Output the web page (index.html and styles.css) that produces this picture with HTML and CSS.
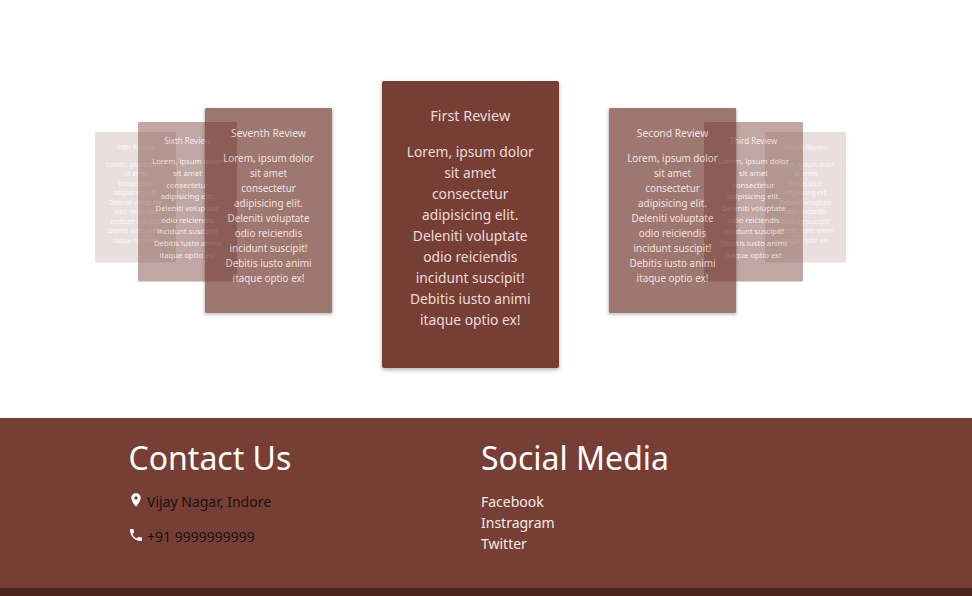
FILE: index.html

```html
<!DOCTYPE html>
<html lang="en">
<head>
    <meta charset="UTF-8">
    <meta name="viewport" content="width=device-width, initial-scale=1.0">
    <title>Reviews</title>
    <link rel="stylesheet" href="styles.css">
</head>
<body>
    <section class="reviews">
        <div class="slide slide-far left">
            <h3>Fifth Review</h3>
            <p>Lorem, ipsum dolor sit amet consectetur adipisicing elit. Deleniti voluptate odio reiciendis incidunt suscipit! Debitis iusto animi itaque optio ex!</p>
        </div>
        <div class="slide slide-far right">
            <h3>Fourth Review</h3>
            <p>Lorem, ipsum dolor sit amet consectetur adipisicing elit. Deleniti voluptate odio reiciendis incidunt suscipit! Debitis iusto animi itaque optio ex!</p>
        </div>
        <div class="slide slide-mid left">
            <h3>Sixth Review</h3>
            <p>Lorem, ipsum dolor sit amet consectetur adipisicing elit. Deleniti voluptate odio reiciendis incidunt suscipit! Debitis iusto animi itaque optio ex!</p>
        </div>
        <div class="slide slide-mid right">
            <h3>Third Review</h3>
            <p>Lorem, ipsum dolor sit amet consectetur adipisicing elit. Deleniti voluptate odio reiciendis incidunt suscipit! Debitis iusto animi itaque optio ex!</p>
        </div>
        <div class="slide slide-near left">
            <h3>Seventh Review</h3>
            <p>Lorem, ipsum dolor sit amet consectetur adipisicing elit. Deleniti voluptate odio reiciendis incidunt suscipit! Debitis iusto animi itaque optio ex!</p>
        </div>
        <div class="slide slide-near right">
            <h3>Second Review</h3>
            <p>Lorem, ipsum dolor sit amet consectetur adipisicing elit. Deleniti voluptate odio reiciendis incidunt suscipit! Debitis iusto animi itaque optio ex!</p>
        </div>
        <div class="slide slide-active">
            <h3>First Review</h3>
            <p>Lorem, ipsum dolor sit amet consectetur adipisicing elit. Deleniti voluptate odio reiciendis incidunt suscipit! Debitis iusto animi itaque optio ex!</p>
        </div>
    </section>

    <footer class="footer">
        <div class="footer-col contact">
            <h2>Contact Us</h2>
            <div class="contact-row">
                <svg class="icon" viewBox="0 0 24 24"><path d="M12 2C8.13 2 5 5.13 5 9c0 5.25 7 13 7 13s7-7.75 7-13c0-3.87-3.13-7-7-7zm0 9.5a2.5 2.5 0 1 1 0-5 2.5 2.5 0 0 1 0 5z"/></svg>
                <span>Vijay Nagar, Indore</span>
            </div>
            <div class="contact-row">
                <svg class="icon" viewBox="0 0 24 24"><path d="M6.62 10.79c1.44 2.83 3.76 5.14 6.59 6.59l2.2-2.2c.27-.27.67-.36 1.02-.24 1.12.37 2.33.57 3.57.57.55 0 1 .45 1 1V20c0 .55-.45 1-1 1-9.39 0-17-7.61-17-17 0-.55.45-1 1-1h3.5c.55 0 1 .45 1 1 0 1.25.2 2.45.57 3.57.11.35.03.74-.25 1.02l-2.2 2.2z"/></svg>
                <span>+91 9999999999</span>
            </div>
        </div>
        <div class="footer-col social">
            <h2>Social Media</h2>
            <a href="#">Facebook</a>
            <a href="#">Instragram</a>
            <a href="#">Twitter</a>
        </div>
    </footer>
    <div class="footer-strip"></div>
</body>
</html>
```

FILE: styles.css

```css
* {
    box-sizing: border-box;
}

body {
    margin: 0;
    background: #fff;
    font-family: "Noto Sans", "Open Sans", sans-serif;
}

.reviews {
    position: relative;
    height: 418px;
    overflow: hidden;
}

.slide {
    position: absolute;
    width: 178px;
    height: 287px;
    padding: 24px;
    background: #773e36;
    color: #ecdcd9;
    text-align: center;
    border-radius: 2px;
    box-shadow: 0 2px 4px rgba(0, 0, 0, 0.3);
    transform-origin: top center;
}

.slide h3 {
    margin: 0 -10px 14px;
    font-size: 14.4px;
    font-weight: 400;
    line-height: 22px;
}

.slide p {
    margin: 0;
    font-size: 13.8px;
    line-height: 21px;
}

.slide-active {
    left: 381.5px;
    top: 81px;
    width: 177.5px;
}

.slide-near {
    top: 108px;
    transform: translateX(0.5px) scale(0.714);
    opacity: 0.7;
}
.slide-near.left { left: 179px; }
.slide-near.right { left: 583px; }

.slide-mid {
    top: 122px;
    transform: translateX(0.5px) scale(0.556);
    opacity: 0.45;
    box-shadow: none;
}
.slide-mid.left { left: 98px; }
.slide-mid.right { left: 664px; }

.slide-far {
    top: 132px;
    transform: translateX(0.5px) scale(0.455);
    opacity: 0.16;
    box-shadow: none;
}
.slide-far.left { left: 46px; }
.slide-far.right { left: 716px; }

.footer {
    display: grid;
    grid-template-columns: 352px 1fr;
    height: 170px;
    padding: 20px 0 0 129px;
    background: #773e36;
}

.footer h2 {
    margin: 0 0 13px;
    font-size: 32px;
    font-weight: 400;
    line-height: 40px;
    color: #fff;
}

.contact h2 {
    margin-left: -0.5px;
}

.contact-row {
    display: flex;
    align-items: flex-start;
    gap: 3px;
    height: 21px;
    margin-bottom: 14px;
    font-size: 14px;
    line-height: 21px;
    color: #1a1010;
}

.icon {
    width: 16px;
    height: 16px;
    margin: 1px 0 0 -1px;
    fill: #fff;
}

.social a {
    display: block;
    font-size: 14px;
    line-height: 21px;
    color: #f3ebe9;
    text-decoration: none;
}

.footer-strip {
    height: 8px;
    background: #4a2520;
}
```
